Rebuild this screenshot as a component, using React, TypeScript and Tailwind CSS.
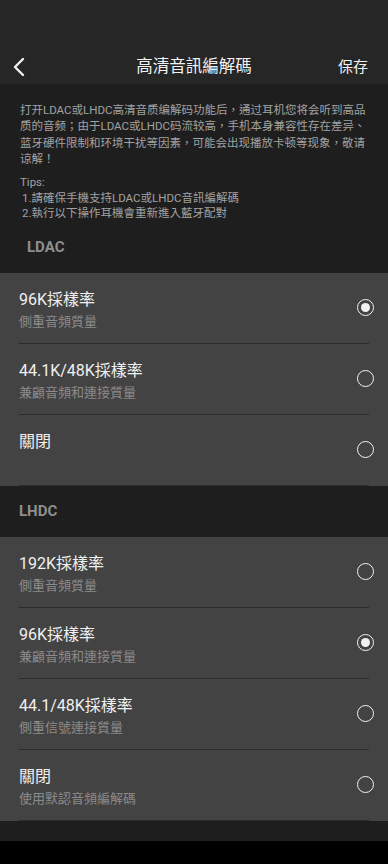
import React from "react"

interface Option {
  title: string
  sub?: string
  checked?: boolean
}

const ldacOptions: Option[] = [
  { title: "96K採樣率", sub: "側重音頻質量", checked: true },
  { title: "44.1K/48K採樣率", sub: "兼顧音頻和連接質量" },
  { title: "關閉" },
]

const lhdcOptions: Option[] = [
  { title: "192K採樣率", sub: "側重音頻質量" },
  { title: "96K採樣率", sub: "兼顧音頻和連接質量", checked: true },
  { title: "44.1/48K採樣率", sub: "側重信號連接質量" },
  { title: "關閉", sub: "使用默認音頻編解碼" },
]

const descLines = [
  "打开LDAC或LHDC高清音质编解码功能后，通过耳机您将会听到高品",
  "质的音频；由于LDAC或LHDC码流较高，手机本身兼容性存在差异、",
  "蓝牙硬件限制和环境干扰等因素，可能会出现播放卡顿等现象，敬请",
  "谅解！",
]

function Radio({ checked }: { checked?: boolean }) {
  return (
    <div className="flex h-[17px] w-[17px] items-center justify-center rounded-full border-[1.5px] border-[#f2f2f2]">
      {checked && <div className="h-[9px] w-[9px] rounded-full bg-[#f2f2f2]" />}
    </div>
  )
}

function OptionRow({ option }: { option: Option }) {
  return (
    <div className="mx-[19px] flex h-[71px] items-start justify-between border-b border-[#2c2c2c]">
      <div className="pt-[17px]">
        <div className="text-[16px] leading-[20px] text-[#f0f0f0]">{option.title}</div>
        {option.sub && (
          <div className="mt-[2px] text-[13px] leading-[20px] text-[#8b8b8b]">{option.sub}</div>
        )}
      </div>
      <div className="-mr-[5px] flex h-full items-center">
        <Radio checked={option.checked} />
      </div>
    </div>
  )
}

export default function App() {
  return (
    <div
      className="w-full bg-[#1e1e1e]"
      style={{ fontFamily: 'Roboto, "Noto Sans CJK TC", "Noto Sans CJK SC", sans-serif' }}
    >
      {/* Header */}
      <div className="h-[84px] bg-[#262626] pt-[50px]">
        <div className="relative flex h-[34px] items-center justify-between pl-[13px] pr-[20px]">
          <svg width="12" height="20" viewBox="0 0 12 20" fill="none">
            <path d="M10 2 L2 10 L10 18" stroke="#f2f2f2" strokeWidth="2.4" strokeLinecap="round" strokeLinejoin="round" />
          </svg>
          <div className="absolute left-0 right-0 text-center text-[16.5px] text-[#f2f2f2] pointer-events-none">
            高清音訊編解碼
          </div>
          <div className="text-[15px] text-[#f2f2f2]">保存</div>
        </div>
      </div>

      {/* Description */}
      <div className="px-5 pt-[18px] text-[11.5px] text-[#a2a2a2]">
        {descLines.map((l) => (
          <div key={l} className="whitespace-nowrap leading-[16.3px]">{l}</div>
        ))}
        <div className="mt-[8px] leading-[15.5px]">
          <div>Tips:</div>
          <div className="pl-[2px]">1.請確保手機支持LDAC或LHDC音訊編解碼</div>
          <div className="pl-[2px]">2.執行以下操作耳機會重新進入藍牙配對</div>
        </div>
      </div>

      {/* LDAC */}
      <div className="flex h-[51px] items-center pl-[27px] text-[15px] font-bold text-[#8e8e8e]">LDAC</div>
      <div className="bg-[#434343]">
        {ldacOptions.map((o) => (
          <OptionRow key={o.title} option={o} />
        ))}
      </div>

      {/* LHDC */}
      <div className="flex h-[51px] items-center pl-[19px] text-[15px] font-bold text-[#8e8e8e]">LHDC</div>
      <div className="bg-[#434343]">
        {lhdcOptions.map((o) => (
          <OptionRow key={o.title + o.sub} option={o} />
        ))}
      </div>

      <div className="h-[20px] bg-[#1e1e1e]" />
      <div className="h-[23px] bg-black" />
    </div>
  )
}
